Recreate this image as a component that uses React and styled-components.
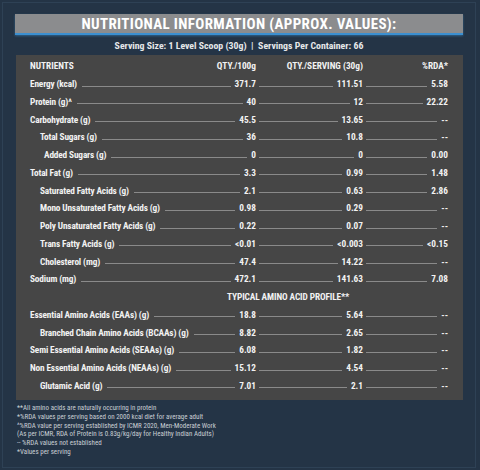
import React from "react";
import styled, { createGlobalStyle } from "styled-components";

const GlobalStyle = createGlobalStyle`
  html, body { margin: 0; padding: 0; background: #243446; }
  * { box-sizing: border-box; }
`;

const FONT = `"Roboto Condensed", "Open Sans", "Liberation Sans", sans-serif`;

const Page = styled.div`
  width: 480px;
  height: 470px;
  padding: 2px 4px 2px 2px;
  background: #243446;
  font-family: ${FONT};
`;

const Frame = styled.div`
  height: 100%;
  border: 1px solid #2e4155;
  padding: 11px 12px 0 12px;
  display: flex;
  flex-direction: column;
`;

const TitleBar = styled.div`
  height: 21px;
  background: #8b8c8e;
  border-bottom: 2px solid #3b8fd0;
  box-shadow: 0 1px 2px rgba(59, 143, 208, 0.5);
  display: flex;
  align-items: center;
  justify-content: center;
  color: #ffffff;
  font-weight: 700;
  font-size: 15px;
  letter-spacing: 0.35px;
  padding-top: 1px;
`;

const Serving = styled.div`
  height: 20px;
  display: flex;
  align-items: center;
  justify-content: center;
  color: #e6e8ea;
  font-size: 9.8px;
  font-weight: 700;
`;

const Panel = styled.div`
  margin: 0 0 0 1px;
  background: #464646;
  padding: 2px 15px 6px 14px;
  color: #f2f2f2;
  font-size: 9.3px;
  font-weight: 700;
`;

const Row = styled.div`
  display: grid;
  grid-template-columns: 226px 107px 85px;
  height: 17.76px;
  align-items: center;
`;

const Cell = styled.div`
  display: flex;
  align-items: baseline;
  padding-left: ${(p) => p.$indent || 0}px;
  white-space: nowrap;
`;

const Label = styled.span`
  letter-spacing: -0.15px;
`;

const Leader = styled.span`
  flex: 1;
  height: 1px;
  background: #8a8a8a;
  margin: 0 4px 0 ${(p) => (p.$first ? 5 : 3)}px;
  position: relative;
  top: -0.5px;
`;

const Value = styled.span``;

const HeadCell = styled.div`
  display: flex;
  justify-content: ${(p) => (p.$split ? "space-between" : "flex-end")};
  white-space: nowrap;
`;

const Section = styled.div`
  grid-column: 1 / -1;
  padding-left: 197px;
  letter-spacing: -0.1px;
  white-space: nowrap;
`;

const Notes = styled.div`
  padding: 4px 0 0 2px;
  color: #c9ced4;
  font-size: 7px;
  line-height: 8.7px;
  font-weight: 400;
`;

const rows = [
  { label: "Energy (kcal)", indent: 0, v: ["371.7", "111.51", "5.58"] },
  { label: "Protein (g)^", indent: 0, v: ["40", "12", "22.22"] },
  { label: "Carbohydrate (g)", indent: 0, v: ["45.5", "13.65", "--"] },
  { label: "Total Sugars (g)", indent: 10, v: ["36", "10.8", "--"] },
  { label: "Added Sugars (g)", indent: 14, v: ["0", "0", "0.00"] },
  { label: "Total Fat (g)", indent: 0, v: ["3.3", "0.99", "1.48"] },
  { label: "Saturated Fatty Acids (g)", indent: 10, v: ["2.1", "0.63", "2.86"] },
  { label: "Mono Unsaturated Fatty Acids (g)", indent: 10, v: ["0.98", "0.29", "--"] },
  { label: "Poly Unsaturated Fatty Acids (g)", indent: 10, v: ["0.22", "0.07", "--"] },
  { label: "Trans Fatty Acids (g)", indent: 10, v: ["<0.01", "<0.003", "<0.15"] },
  { label: "Cholesterol (mg)", indent: 10, v: ["47.4", "14.22", "--"] },
  { label: "Sodium (mg)", indent: 0, v: ["472.1", "141.63", "7.08"] },
  { section: "TYPICAL AMINO ACID PROFILE**" },
  { label: "Essential Amino Acids (EAAs) (g)", indent: 0, v: ["18.8", "5.64", "--"] },
  { label: "Branched Chain Amino Acids (BCAAs) (g)", indent: 10, v: ["8.82", "2.65", "--"] },
  { label: "Semi Essential Amino Acids (SEAAs) (g)", indent: 0, v: ["6.08", "1.82", "--"] },
  { label: "Non Essential Amino Acids (NEAAs) (g)", indent: 0, v: ["15.12", "4.54", "--"] },
  { label: "Glutamic Acid (g)", indent: 10, v: ["7.01", "2.1", "--"] },
];

const notes = [
  "**All amino acids are naturally occurring in protein",
  "*%RDA values per serving based on 2000 kcal diet for average adult",
  "^%RDA value per serving established by ICMR 2020, Men-Moderate Work",
  "(As per ICMR, RDA of Protein is 0.83g/kg/day for Healthy Indian Adults)",
  "-- %RDA values not established",
  "*Values per serving",
];

export default function App() {
  return (
    <>
      <GlobalStyle />
      <Page>
        <Frame>
          <TitleBar>NUTRITIONAL INFORMATION (APPROX. VALUES):</TitleBar>
          <Serving>Serving Size: 1 Level Scoop (30g) &nbsp;|&nbsp; Servings Per Container: 66</Serving>
          <Panel>
            <Row>
              <HeadCell $split>
                <span>NUTRIENTS</span>
                <span>QTY./100g</span>
              </HeadCell>
              <HeadCell>QTY./SERVING (30g)</HeadCell>
              <HeadCell>%RDA*</HeadCell>
            </Row>
            {rows.map((r, i) =>
              r.section ? (
                <Row key={i}>
                  <Section>{r.section}</Section>
                </Row>
              ) : (
                <Row key={i}>
                  <Cell $indent={r.indent}>
                    <Label>{r.label}</Label>
                    <Leader $first />
                    <Value>{r.v[0]}</Value>
                  </Cell>
                  <Cell>
                    <Leader />
                    <Value>{r.v[1]}</Value>
                  </Cell>
                  <Cell>
                    <Leader />
                    <Value>{r.v[2]}</Value>
                  </Cell>
                </Row>
              )
            )}
          </Panel>
          <Notes>
            {notes.map((n, i) => (
              <div key={i}>{n}</div>
            ))}
          </Notes>
        </Frame>
      </Page>
    </>
  );
}
